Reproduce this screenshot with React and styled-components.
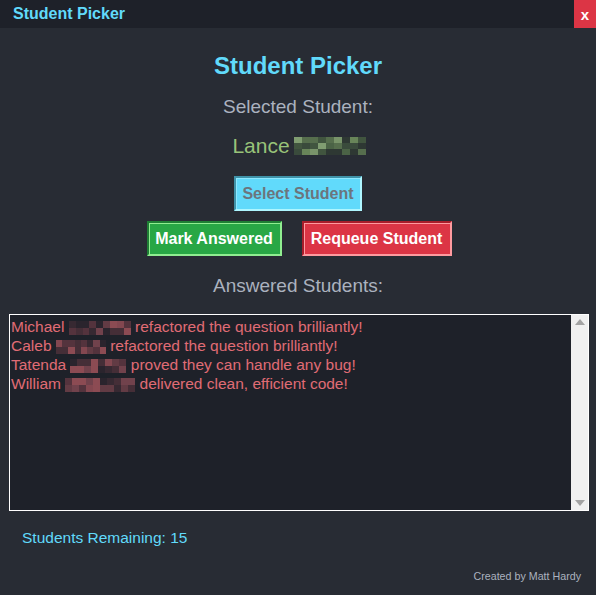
import React from "react";
import styled, { createGlobalStyle } from "styled-components";

const GlobalStyle = createGlobalStyle`
  html, body {
    margin: 0;
    padding: 0;
    background: #282c34;
  }
  * {
    box-sizing: border-box;
  }
`;

const answered = [
  { first: "Michael", blur: 62, rest: "refactored the question brilliantly!" },
  { first: "Caleb", blur: 50, rest: "refactored the question brilliantly!" },
  { first: "Tatenda", blur: 56, rest: "proved they can handle any bug!" },
  { first: "William", blur: 70, rest: "delivered clean, efficient code!" },
];

const redShades = ["#3a2a33", "#5a3640", "#7a4650", "#8e4c55", "#4a3039", "#6a3e48", "#2c252e", "#985058"];
const greenShades = ["#4f6a48", "#6f8f5e", "#3c4f3d", "#82a070", "#5b7650", "#2f3a33", "#8aaa78", "#445a41"];

// deterministic mosaic colours for the redacted surnames
const cells = (count, palette, seed) =>
  Array.from({ length: count }, (_, i) => palette[(i * 5 + seed * 3 + ((i * i) % 7)) % palette.length]);

const Mosaic = ({ width, height, palette, seed, cell = 7 }) => {
  const cols = Math.ceil(width / cell);
  const rows = Math.ceil(height / cell);
  return (
    <MosaicGrid style={{ width, height, gridTemplateColumns: `repeat(${cols}, 1fr)` }}>
      {cells(cols * rows, palette, seed).map((c, i) => (
        <Cell key={i} $c={c} />
      ))}
    </MosaicGrid>
  );
};

const App = () => {
  return (
    <>
      <GlobalStyle />
      <Window>
        <TitleBar>
          <TitleText>Student Picker</TitleText>
          <CloseButton>x</CloseButton>
        </TitleBar>
        <Body>
          <Heading>Student Picker</Heading>
          <Label>Selected Student:</Label>
          <Selected>
            Lance <Mosaic width={72} height={18} palette={greenShades} seed={2} cell={8} />
          </Selected>
          <SelectButton>Select Student</SelectButton>
          <ButtonRow>
            <ActionButton $variant="green">Mark Answered</ActionButton>
            <ActionButton $variant="red">Requeue Student</ActionButton>
          </ButtonRow>
          <Label $mt={20}>Answered Students:</Label>
          <TextBox>
            <Lines>
              {answered.map((a, i) => (
                <Line key={a.first}>
                  {a.first} <Mosaic width={a.blur} height={14} palette={redShades} seed={i} /> {a.rest}
                </Line>
              ))}
            </Lines>
            <ScrollBar>
              <Arrow $up />
              <Arrow />
            </ScrollBar>
          </TextBox>
          <Remaining>Students Remaining: 15</Remaining>
          <Credit>Created by Matt Hardy</Credit>
        </Body>
      </Window>
    </>
  );
};

const Window = styled.div`
  width: 596px;
  height: 595px;
  background: #282c34;
  display: flex;
  flex-direction: column;
  font-family: "Liberation Sans", Arial, sans-serif;
  overflow: hidden;
`;

const TitleBar = styled.div`
  height: 28px;
  background: #1e2129;
  display: flex;
  align-items: center;
  justify-content: space-between;
  padding-left: 13px;
`;

const TitleText = styled.span`
  color: #61dafb;
  font-weight: bold;
  font-size: 16px;
`;

const CloseButton = styled.div`
  width: 22px;
  height: 28px;
  background: #dc3545;
  color: #fff;
  font-weight: bold;
  font-size: 15px;
  display: flex;
  align-items: center;
  justify-content: center;
`;

const Body = styled.div`
  flex: 1;
  display: flex;
  flex-direction: column;
  align-items: center;
`;

const Heading = styled.h1`
  margin: 25px 0 0;
  font-size: 24px;
  line-height: 26px;
  font-weight: bold;
  color: #61dafb;
`;

const Label = styled.div`
  margin-top: ${(p) => p.$mt || 18}px;
  font-size: 19px;
  line-height: 20px;
  color: #abb2bf;
`;

const Selected = styled.div`
  margin-top: 18px;
  font-size: 21px;
  line-height: 22px;
  color: #98c379;
  display: flex;
  align-items: center;
  gap: 4px;
  padding-left: 2px;
`;

const MosaicGrid = styled.span`
  display: inline-grid;
  vertical-align: middle;
  opacity: 0.9;
  filter: blur(0.4px);
`;

const Cell = styled.span`
  background: ${(p) => p.$c};
`;

const SelectButton = styled.button`
  margin-top: 19px;
  width: 128px;
  height: 35px;
  background: #61dafb;
  color: #6c757d;
  font-family: inherit;
  font-weight: bold;
  font-size: 16px;
  border: 2px solid;
  border-color: #3f92a8 #aef6ff #aef6ff #3f92a8;
  box-shadow: inset 1px 1px 0 #8ee8ff;
  padding: 0;
`;

const ButtonRow = styled.div`
  margin-top: 10px;
  display: flex;
  gap: 20px;
  padding-left: 2px;
`;

const variants = {
  green: { bg: "#28a745", dark: "#1e7e34", light: "#90ee90", w: 135 },
  red: { bg: "#dc3545", dark: "#a71d2a", light: "#ff9a9f", w: 150 },
};

const ActionButton = styled.button`
  width: ${(p) => variants[p.$variant].w}px;
  height: 35px;
  background: ${(p) => variants[p.$variant].bg};
  color: #fff;
  font-family: inherit;
  font-weight: bold;
  font-size: 16px;
  border: 2px solid;
  border-color: ${(p) => {
    const v = variants[p.$variant];
    return `${v.dark} ${v.light} ${v.light} ${v.dark}`;
  }};
  box-shadow: inset 1px 1px 0 ${(p) => variants[p.$variant].light};
  padding: 0;
`;

const TextBox = styled.div`
  margin-top: 18px;
  width: 580px;
  height: 197px;
  border: 1px solid #ffffff;
  background: #1e2129;
  display: flex;
  align-self: flex-start;
  margin-left: 9px;
`;

const Lines = styled.div`
  flex: 1;
  padding: 2px 0 0 1px;
`;

const Line = styled.div`
  font-size: 15.5px;
  line-height: 19px;
  color: #e06c75;
  white-space: nowrap;
`;

const ScrollBar = styled.div`
  width: 17px;
  background: #f0f0f0;
  display: flex;
  flex-direction: column;
  justify-content: space-between;
  align-items: center;
  padding: 4px 0;
`;

const Arrow = styled.div`
  width: 0;
  height: 0;
  border-left: 5px solid transparent;
  border-right: 5px solid transparent;
  ${(p) =>
    p.$up ? "border-bottom: 6px solid #a3a3a3;" : "border-top: 6px solid #a3a3a3;"}
`;

const Remaining = styled.div`
  align-self: flex-start;
  margin: 18px 0 0 22px;
  font-size: 15.5px;
  line-height: 18px;
  color: #61dafb;
`;

const Credit = styled.div`
  align-self: flex-end;
  margin: 22px 15px 0 0;
  font-size: 10.7px;
  line-height: 14px;
  color: #abb2bf;
`;

export default App;
